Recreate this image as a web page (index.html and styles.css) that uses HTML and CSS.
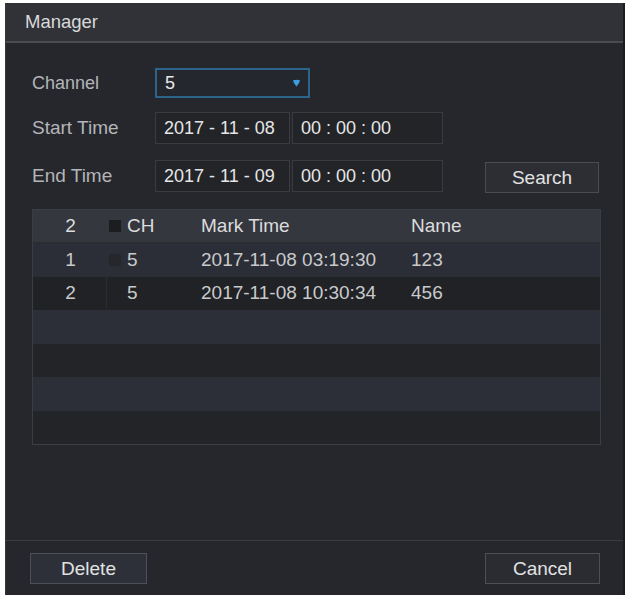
FILE: index.html
```html
<!DOCTYPE html>
<html lang="en">
<head>
<meta charset="utf-8">
<title>Manager</title>
<link rel="stylesheet" href="styles.css">
</head>
<body>
<div class="dialog">
  <div class="titlebar">Manager</div>
  <div class="main">
    <div class="form">
      <div class="row row-channel">
        <span class="label">Channel</span>
        <div class="select">
          <span class="val">5</span>
          <svg class="caret" width="9" height="8" viewBox="0 0 9 8"><path d="M1 1.2 Q4.5 0.4 8 1.2 Q7.6 4.5 4.5 7.4 Q1.4 4.5 1 1.2Z" fill="#3c9de0"/></svg>
        </div>
      </div>
      <div class="row">
        <span class="label wide">Start Time</span>
        <div class="box date">2017 - 11 - 08</div>
        <div class="box time">00 : 00 : 00</div>
      </div>
      <div class="row">
        <span class="label wide">End Time</span>
        <div class="box date">2017 - 11 - 09</div>
        <div class="box time">00 : 00 : 00</div>
        <button class="btn search">Search</button>
      </div>
    </div>
    <div class="table">
      <div class="tr head">
        <div class="c1">2</div>
        <div class="c2"><span class="chk"></span>CH</div>
        <div class="c3">Mark Time</div>
        <div class="c4">Name</div>
      </div>
      <div class="tr r1">
        <div class="c1">1</div>
        <div class="c2"><span class="chk faint"></span>5</div>
        <div class="c3">2017-11-08 03:19:30</div>
        <div class="c4">123</div>
      </div>
      <div class="tr r2">
        <div class="c1">2</div>
        <div class="c2"><span class="chk none"></span>5</div>
        <div class="c3">2017-11-08 10:30:34</div>
        <div class="c4">456</div>
      </div>
      <div class="tr r3"></div>
      <div class="tr r4"></div>
      <div class="tr r5"></div>
      <div class="tr r6"></div>
    </div>
  </div>
  <div class="footer">
    <button class="btn del">Delete</button>
    <button class="btn cancel">Cancel</button>
  </div>
</div>
</body>
</html>
```
FILE: styles.css
```css
html, body {
  margin: 0;
  padding: 0;
  background: #ffffff;
}
body {
  padding: 3px 0 0 5px;
  font-family: "Liberation Sans", Arial, sans-serif;
  height: 595px;
  box-sizing: border-box;
  overflow: hidden;
}
.dialog {
  width: 620px;
  height: 592px;
  background: #25272c;
  display: flex;
  flex-direction: column;
  box-sizing: border-box;
  border-left: 1px solid #34363b;
  border-right: 2px solid #1b1c1f;
}
.titlebar {
  height: 38px;
  background: #303237;
  border-bottom: 2px solid #4a4c51;
  color: #d8d9db;
  font-size: 18.5px;
  line-height: 38px;
  padding-left: 19px;
}
.main {
  flex: 1;
  padding: 25px 24px 0 25px;
}
.form {
  display: flex;
  flex-direction: column;
}
.row {
  display: flex;
  align-items: center;
  height: 32px;
  margin-bottom: 16px;
}
.row-channel {
  height: 30px;
  margin-bottom: 14px;
}
.label {
  width: 123px;
  padding-left: 1px;
  color: #b4b5b8;
  font-size: 18px;
}
.label.wide {
  font-size: 19px;
}
.select {
  width: 155px;
  height: 30px;
  box-sizing: border-box;
  border: 2px solid #2c658c;
  background: #24272d;
  display: flex;
  align-items: center;
  padding: 0 7px 0 8px;
}
.select .val {
  flex: 1;
  color: #e8e8e8;
  font-size: 18px;
}
.box {
  height: 32px;
  box-sizing: border-box;
  border: 1px solid #393b41;
  background: #222428;
  color: #e6e6e6;
  font-size: 18px;
  line-height: 30px;
  padding-left: 8px;
}
.date {
  width: 135px;
}
.time {
  width: 151px;
  margin-left: 2px;
}
.btn {
  font-family: "Liberation Sans", Arial, sans-serif;
  font-size: 19px;
  color: #e2e2e2;
  background: #2c2e34;
  border: 1px solid #4a4c52;
  height: 31px;
  padding: 0;
  box-sizing: border-box;
}
.search {
  width: 114px;
  margin-left: auto;
  margin-top: 3px;
}
.table {
  margin-top: 1px;
  border: 1px solid #3a3d43;
  width: 569px;
  box-sizing: border-box;
  margin-left: 1px;
}
.tr {
  display: grid;
  grid-template-columns: 73px 85px 210px 1fr;
  align-items: center;
  height: 33.5px;
  color: #c9cacc;
  font-size: 19px;
}
.tr.head {
  height: 32px;
  background: #34373d;
  color: #dcdcde;
  font-size: 19px;
  border-bottom: 1px solid #2a2c30;
}
.r1 { background: #2b2e36; }
.r2 { background: #202226; }
.r3 { background: #2c2f38; }
.r4 { background: #222428; }
.r5 { background: #2c2f38; }
.r6 { background: #222428; }
.c1 {
  text-align: center;
  padding-left: 2px;
}
.c2 {
  display: flex;
  align-items: center;
  gap: 6px;
  padding-left: 3px;
  height: 100%;
}
.r2 .c2 {
  border-left: 1px solid #2a2c31;
  padding-left: 2px;
}
.chk {
  width: 12px;
  height: 12px;
  background: #1c1d21;
}
.chk.faint {
  background: #25272d;
}
.chk.none {
  background: transparent;
}
.c3 {
  padding-left: 10px;
}
.c4 {
  padding-left: 10px;
}
.footer {
  height: 55px;
  box-sizing: border-box;
  border-top: 1px solid #3b3d42;
  background: #25272c;
  display: flex;
  align-items: flex-start;
  justify-content: space-between;
  padding: 12px 23px 0 24px;
}
.del {
  width: 117px;
  height: 31px;
  background: #2d3039;
  border-color: #4d5058;
}
.cancel {
  width: 115px;
  height: 31px;
  background: #2a2c32;
  border-color: #4d4f55;
}
```
